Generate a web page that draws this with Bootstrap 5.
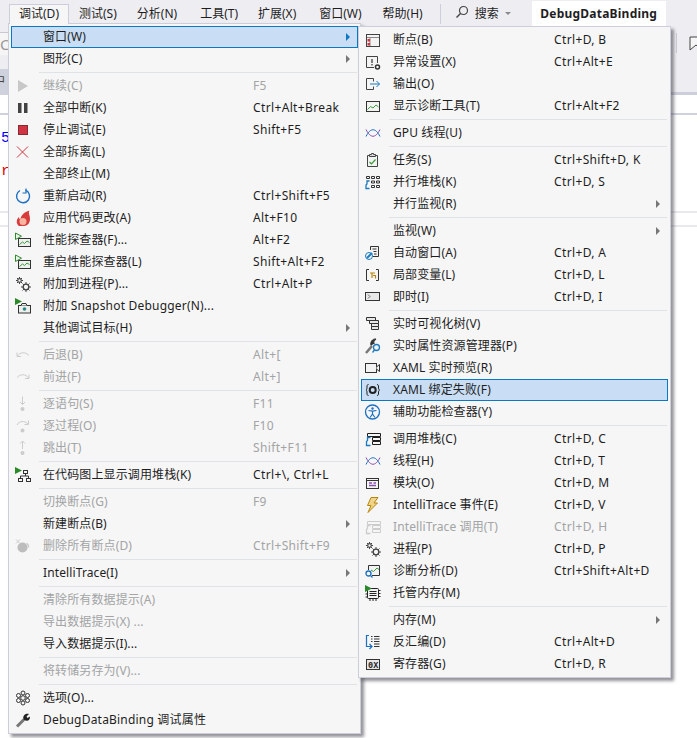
<!DOCTYPE html>
<html lang="zh-CN">
<head>
<meta charset="utf-8">
<title>Debug menu</title>
<link rel="stylesheet" href="https://cdn.jsdelivr.net/npm/bootstrap@5.3.0/dist/css/bootstrap.min.css">
<style>
html,body{height:738px;overflow:hidden;background:#fff}
body{font-family:"Noto Sans","Noto Sans CJK SC",sans-serif;font-size:12px;color:#1e1e1e;position:relative;width:697px}
.band-bar{height:32px;background:#eeeef2}
.bar-tab{margin-left:9px;margin-top:4px;width:60px;height:20px;background:#f6f6f6;border:1px solid #cccedb;border-bottom:0;position:relative;z-index:1060;line-height:18px;text-align:center}
.bar-item{line-height:20px;margin-top:4px;margin-left:20px}
.bar-first{margin-left:10px}
.bar-wide{margin-left:23px}
.bar-near{margin-left:21px}
.bar-search{margin-left:6px}
.bar-title{margin-left:21px;margin-top:1px;width:134px;height:25px;background:#fff;font-weight:700;line-height:25px;text-align:center;letter-spacing:.22px}
.bar-sep{width:1px;height:20px;background:#cccedb;margin:4px 14px 0 17px}
.bar-caret{width:0;height:0;border:3px solid transparent;border-top:3px solid #8a8a8a;border-bottom:0;margin:12px 0 0 6px}
.band-sub{height:23px;background:#eeeef2}
.side-input{width:9px;background:#f5f5f5;border-top:1px solid #c8c8d0;color:#999;overflow:hidden;font-size:15px;line-height:22px;white-space:nowrap}
.side-sep{width:1px;height:20px;background:#cccedb;margin:1px 12px 0 0}
.band-grey{height:14px;background:#eeeef2}
.band-tabs{height:23px;background:#eeeef2}
.side-tab{width:9px;background:#cfd1dd;color:#444;overflow:hidden;line-height:23px;white-space:nowrap;text-indent:-7px}
.band-line{height:3px;background:#eeeef2}
.band-line .side-tab{line-height:0}
.rule-right{width:26px;background:#cccedb}
.band-white{height:18px;background:#fff}
.rule-full{height:2px;background:#cfd1dd}
.code-area{height:96px;background:#fff;font-family:"Liberation Mono",monospace;font-size:15px;line-height:17px;padding-left:1px;padding-top:15px}
.code-num{color:#0000ff;height:33px}
.code-str{color:#e00000}
.gap-a{height:12px}
.rule-soft{height:2px;background:#e8e8ee}
.vs-menu.dropdown-menu{display:block;position:absolute;margin:0;padding:2px;background:#f6f6f6;border:1px solid #cccedb;border-radius:0;box-shadow:3px 3px 3px rgba(60,60,70,.55);color:#1e1e1e;font-size:12px;min-width:0}
.menu-main{left:8px;top:23px;width:353px;z-index:1000}
.menu-sub{left:358px;top:26px;width:313px;z-index:1001}
.vs-menu .dropdown-item{display:flex;align-items:center;height:22px;padding:0 0 0 3px;border:1px solid transparent;color:#1e1e1e;line-height:20px;white-space:nowrap;width:auto;background:transparent;letter-spacing:.12px;--br:#1c7ac0}
.vs-menu .dropdown-item.off{color:#a2a4a5;--br:#ccc}
.vs-menu .dropdown-item.hot{background:#c9def5;border-color:#0a78c2}
.vs-menu .dropdown-divider{margin:2px 1px 2px 28px;border-top:1px solid #e0e3e6;opacity:1;height:0}
.ico{width:16px;height:16px;flex:none;margin-right:12px;display:block;overflow:visible}
.off .ico{color:#ccc}
.lbl{flex:none}
.menu-main .lbl{width:210px}
.menu-sub .lbl{width:161px}
.vs-menu .lbl.lbl-free{width:auto;letter-spacing:.2px}
.key{flex:none;letter-spacing:.36px}
.sub-arrow{margin-left:auto;margin-right:7px;width:0;height:0;border-left:4px solid #777;border-top:4px solid transparent;border-bottom:4px solid transparent}
.hot .sub-arrow{border-left-color:#0a78c2}
svg text{font-family:"Liberation Mono",monospace}
</style>
</head>
<body>
<svg width="0" height="0" class="position-absolute">
<defs>
<symbol id="i-chart" viewBox="0 0 16 16" overflow="visible"><rect x="3.500" y="6.500" width="12" height="8" fill="#eef0ee" stroke="#333"/><path d="M4.500 12.500l3-2.500 2 1.500 2.500-2.500 2.500 1.500" fill="none" stroke="#3a9a3a"/><path d="M.5 1v6.500l6-3.300z" fill="#e8f5e8" stroke="#2f8a2f"/></symbol>
<symbol id="i-gears" viewBox="0 0 16 16" overflow="visible"><g fill="none" stroke="#444"><circle cx="4.500" cy="4.500" r="1.800" stroke-width="1.200"/><circle cx="11" cy="11" r="2.800" stroke-width="1.300"/></g><g stroke="#444"><path d="M4.500 1v1.500M4.500 6.500V8M1 4.500h1.500M6.500 4.500H8M2 2l1 1M6 6l1 1M7 2L6 3M3 6L2 7"/><path d="M11 6v2M11 14v2M6 11h2M14 11h2M7.500 7.500l1.300 1.300M13.200 13.200l1.300 1.300M14.500 7.500l-1.300 1.300M8.800 13.200l-1.300 1.300"/></g></symbol>
<symbol id="i-threads" viewBox="0 0 16 16" overflow="visible"><path d="M1 4.500c4.500 9 9.500 9 14 0" fill="none" stroke="#8a4fb0"/><path d="M1 11.500c4.500-9 9.500-9 14 0" fill="none" stroke="#1c70c0"/></symbol>
<symbol id="i-stack" viewBox="0 0 16 16" overflow="visible"><path d="M2.500 2.500h13v3h-13zM7.500 6.500h8v3h-8zM7.500 10.500h8v3h-8z" fill="none" stroke="currentColor"/><path d="M5.500 6.500h-3v3l-1 1v4h4" fill="none" stroke="var(--br)" stroke-width="1.300"/></symbol>
</defs>
</svg>

<div class="band-bar d-flex align-items-start">
  <div class="bar-tab">调试(D)</div>
  <div class="bar-item bar-first">测试(S)</div>
  <div class="bar-item">分析(N)</div>
  <div class="bar-item bar-wide">工具(T)</div>
  <div class="bar-item">扩展(X)</div>
  <div class="bar-item bar-wide">窗口(W)</div>
  <div class="bar-item bar-near">帮助(H)</div>
  <div class="bar-sep"></div>
  <svg class="mt-1" width="14" height="16" viewBox="0 0 14 16"><circle cx="8.500" cy="6.500" r="4" fill="none" stroke="#444" stroke-width="1.200"/><path d="M5.500 9.500L1.500 13.500" stroke="#444" stroke-width="1.500"/></svg>
  <div class="bar-item bar-search">搜索</div>
  <div class="bar-caret"></div>
  <div class="bar-title">DebugDataBinding</div>
</div>
<div class="band-sub d-flex justify-content-between">
  <div class="side-input">C</div>
  <div class="d-flex">
    <div class="side-sep"></div>
    <svg width="8" height="15" viewBox="0 0 8 15" class="mt-1"><path d="M1 14V1h12v13l-6-5z" fill="#f5f5f5" stroke="#444"/></svg>
  </div>
</div>
<div class="band-grey"></div>
<div class="band-tabs d-flex"><div class="side-tab">中</div></div>
<div class="band-line d-flex justify-content-between"><div class="side-tab"></div><div class="rule-right"></div></div>
<div class="band-white"></div>
<div class="rule-full"></div>
<div class="code-area"><div class="code-num">5</div><div class="code-str">r</div></div>
<div class="rule-soft"></div>
<div class="gap-a"></div>
<div class="rule-soft"></div>

<div class="dropdown-menu show vs-menu menu-main">
  <div class="dropdown-item hot"><span class="ico"></span><span class="lbl">窗口(W)</span><span class="sub-arrow"></span></div>
  <div class="dropdown-item"><span class="ico"></span><span class="lbl">图形(C)</span><span class="sub-arrow"></span></div>
  <div class="dropdown-divider"></div>
  <div class="dropdown-item off"><svg class="ico" viewBox="0 0 16 16"><path d="M3 2l10 6-10 6z" fill="#c8c8c8"/></svg><span class="lbl">继续(C)</span><span class="key">F5</span></div>
  <div class="dropdown-item"><svg class="ico" viewBox="0 0 16 16"><path d="M3 3h3.500v10H3zM9 3h3.500v10H9z" fill="#424242"/></svg><span class="lbl">全部中断(K)</span><span class="key">Ctrl+Alt+Break</span></div>
  <div class="dropdown-item"><svg class="ico" viewBox="0 0 16 16"><rect x="3.500" y="3.500" width="9" height="9" fill="#d13544" stroke="#8a2a33"/></svg><span class="lbl">停止调试(E)</span><span class="key">Shift+F5</span></div>
  <div class="dropdown-item"><svg class="ico" viewBox="0 0 16 16"><path d="M2 2.500l11 11M13 2.500l-11 11" stroke="#d1343f" fill="none"/></svg><span class="lbl">全部拆离(L)</span></div>
  <div class="dropdown-item"><span class="ico"></span><span class="lbl">全部终止(M)</span></div>
  <div class="dropdown-item"><svg class="ico" viewBox="0 0 16 16"><path d="M5 2.500A6.500 6.500 0 1 0 10.500 2.200" fill="none" stroke="#1c6fc4" stroke-width="1.400"/><path d="M11 .5v4.500H7.500" fill="none" stroke="#1c6fc4" stroke-width="1.200"/></svg><span class="lbl">重新启动(R)</span><span class="key">Ctrl+Shift+F5</span></div>
  <div class="dropdown-item"><svg class="ico" viewBox="0 0 16 16"><path d="M4 16C1 14 1 9.500 4 7c0 1.500.5 2.200 1.500 2.500C5.500 6 9 2 14.500 .5 13 3 15 5 15 9c0 4-2.500 7-6 7z" fill="#d83b3b"/><ellipse cx="8" cy="11.500" rx="3.500" ry="3.500" fill="#f9b5a0"/></svg><span class="lbl">应用代码更改(A)</span><span class="key">Alt+F10</span></div>
  <div class="dropdown-item"><svg class="ico"><use href="#i-chart"/></svg><span class="lbl">性能探查器(F)...</span><span class="key">Alt+F2</span></div>
  <div class="dropdown-item"><svg class="ico"><use href="#i-chart"/></svg><span class="lbl">重启性能探查器(L)</span><span class="key">Shift+Alt+F2</span></div>
  <div class="dropdown-item"><svg class="ico"><use href="#i-gears"/></svg><span class="lbl">附加到进程(P)...</span><span class="key">Ctrl+Alt+P</span></div>
  <div class="dropdown-item"><svg class="ico" viewBox="0 0 16 16"><rect x="3.500" y="7.500" width="12" height="7.500" fill="#eef0ee" stroke="#333"/><path d="M6 7.500l1-2h4l1 2" fill="#eef0ee" stroke="#333"/><circle cx="9.500" cy="11" r="1.800" fill="#2a8a8a"/><path d="M0 0v7l7-3.500z" fill="#2a8a2a"/></svg><span class="lbl lbl-free">附加 Snapshot Debugger(N)...</span></div>
  <div class="dropdown-item"><span class="ico"></span><span class="lbl">其他调试目标(H)</span><span class="sub-arrow"></span></div>
  <div class="dropdown-divider"></div>
  <div class="dropdown-item off"><svg class="ico" viewBox="0 0 16 16"><path d="M2 5.500v4h4M2.500 9C5 5 10 4.500 14 8.500" fill="none" stroke="#ccc"/></svg><span class="lbl">后退(B)</span><span class="key">Alt+[</span></div>
  <div class="dropdown-item off"><svg class="ico" viewBox="0 0 16 16"><path d="M14 5.500v4h-4M13.500 9C11 5 6 4.500 2 8.500" fill="none" stroke="#ccc"/></svg><span class="lbl">前进(F)</span><span class="key">Alt+]</span></div>
  <div class="dropdown-divider"></div>
  <div class="dropdown-item off"><svg class="ico" viewBox="0 0 16 16"><path d="M7.500 .5v8M5 6l2.500 2.500L10 6" fill="none" stroke="#ccc"/><circle cx="7.500" cy="13" r="2" fill="#ccc"/></svg><span class="lbl">逐语句(S)</span><span class="key">F11</span></div>
  <div class="dropdown-item off"><svg class="ico" viewBox="0 0 16 16"><path d="M2 7C4 2.500 10 2.500 13 6M13.500 2.500v4h-4" fill="none" stroke="#ccc"/><circle cx="7.500" cy="12.500" r="2" fill="#ccc"/></svg><span class="lbl">逐过程(O)</span><span class="key">F10</span></div>
  <div class="dropdown-item off"><svg class="ico" viewBox="0 0 16 16"><path d="M7.500 9V1M5 3.500L7.500 1 10 3.500" fill="none" stroke="#ccc"/><circle cx="7.500" cy="13" r="2" fill="#ccc"/></svg><span class="lbl">跳出(T)</span><span class="key">Shift+F11</span></div>
  <div class="dropdown-divider"></div>
  <div class="dropdown-item"><svg class="ico" viewBox="0 0 16 16"><path d="M0 0v7l7-3.500z" fill="#2a8a2a"/><g fill="none" stroke="#333"><rect x="8.500" y="3.500" width="4" height="3"/><rect x="3.500" y="11.500" width="4" height="3"/><rect x="11.500" y="11.500" width="4" height="3"/><path d="M10.500 6.500v2.500M5.500 11.500V9h8v2.500"/></g></svg><span class="lbl">在代码图上显示调用堆栈(K)</span><span class="key">Ctrl+\, Ctrl+L</span></div>
  <div class="dropdown-divider"></div>
  <div class="dropdown-item off"><span class="ico"></span><span class="lbl">切换断点(G)</span><span class="key">F9</span></div>
  <div class="dropdown-item"><span class="ico"></span><span class="lbl">新建断点(B)</span><span class="sub-arrow"></span></div>
  <div class="dropdown-item off"><svg class="ico" viewBox="0 0 16 16"><circle cx="7.500" cy="9.500" r="5" fill="#bdbdbd"/><path d="M11.500 5a5 5 0 0 1 2 4.500" fill="none" stroke="#ccc" stroke-width="1.500"/><path d="M1 1.500l4 4M5 1.500l-4 4" stroke="#ccc"/></svg><span class="lbl">删除所有断点(D)</span><span class="key">Ctrl+Shift+F9</span></div>
  <div class="dropdown-divider"></div>
  <div class="dropdown-item"><span class="ico"></span><span class="lbl">IntelliTrace(I)</span><span class="sub-arrow"></span></div>
  <div class="dropdown-divider"></div>
  <div class="dropdown-item off"><span class="ico"></span><span class="lbl">清除所有数据提示(A)</span></div>
  <div class="dropdown-item off"><span class="ico"></span><span class="lbl">导出数据提示(X) ...</span></div>
  <div class="dropdown-item"><span class="ico"></span><span class="lbl">导入数据提示(I)...</span></div>
  <div class="dropdown-divider"></div>
  <div class="dropdown-item off"><span class="ico"></span><span class="lbl">将转储另存为(V)...</span></div>
  <div class="dropdown-divider"></div>
  <div class="dropdown-item"><svg class="ico" viewBox="0 0 16 16"><g fill="none" stroke="#333"><circle cx="8" cy="8" r="2.300"/><circle cx="8" cy="3" r="2"/><circle cx="8" cy="13" r="2"/><circle cx="3.500" cy="5.500" r="2"/><circle cx="12.500" cy="5.500" r="2"/><circle cx="3.500" cy="10.500" r="2"/><circle cx="12.500" cy="10.500" r="2"/></g></svg><span class="lbl">选项(O)...</span></div>
  <div class="dropdown-item"><svg class="ico" viewBox="0 0 16 16"><path d="M2 14.500L9 7.500" stroke="#777" stroke-width="3"/><path d="M8.500 7.500C7.500 4 10 1 14 2L11.500 4.500l1 1.500 2.500-1.500C15 9 12 10 8.500 7.500z" fill="#222"/></svg><span class="lbl lbl-free">DebugDataBinding 调试属性</span></div>
</div>

<div class="dropdown-menu show vs-menu menu-sub">
  <div class="dropdown-item"><svg class="ico" viewBox="0 0 16 16"><rect x="1.500" y="2.500" width="13" height="12" fill="#f3f3f3" stroke="#424242"/><path d="M2 5.500h12M5 6v8" stroke="#888"/><rect x="2.500" y="7" width="2.500" height="2.500" fill="#d1343f"/><rect x="2.500" y="11" width="2.500" height="2.500" fill="#d1343f"/></svg><span class="lbl">断点(B)</span><span class="key">Ctrl+D, B</span></div>
  <div class="dropdown-item"><svg class="ico" viewBox="0 0 16 16"><path d="M9 13.500H1.500v-11h11V9" fill="#f3f3f3" stroke="#424242"/><path d="M7 5v4M7 10v1.500" stroke="#333" stroke-width="1.200"/><circle cx="12.500" cy="13" r="2" fill="none" stroke="#333" stroke-width="1.500"/></svg><span class="lbl">异常设置(X)</span><span class="key">Ctrl+Alt+E</span></div>
  <div class="dropdown-item"><svg class="ico" viewBox="0 0 16 16"><path d="M8.500 5.500v-3h-7v11h7v-3" fill="none" stroke="#424242"/><path d="M5 8h9.500M11.500 5l3 3-3 3" fill="none" stroke="#1c7ac0"/></svg><span class="lbl">输出(O)</span></div>
  <div class="dropdown-item"><svg class="ico" viewBox="0 0 16 16"><rect x="1.500" y="3.500" width="13" height="10" fill="#f3f3f3" stroke="#333"/><path d="M2.500 11.500l3-3 2.500 1.500 3-3 2.500 2" fill="none" stroke="#3a9a3a"/></svg><span class="lbl">显示诊断工具(T)</span><span class="key">Ctrl+Alt+F2</span></div>
  <div class="dropdown-divider"></div>
  <div class="dropdown-item"><svg class="ico"><use href="#i-threads"/></svg><span class="lbl">GPU 线程(U)</span></div>
  <div class="dropdown-divider"></div>
  <div class="dropdown-item"><svg class="ico" viewBox="0 0 16 16"><path d="M4 3.500H2.500v11h10v-11H11" fill="#f3f3f3" stroke="#444"/><path d="M4.500 4.500v-2h2v-1h2v1h2v2z" fill="#ddd" stroke="#444"/><path d="M4.500 10l2 2 4-4.500" fill="none" stroke="#3a9a3a" stroke-width="1.200"/></svg><span class="lbl">任务(S)</span><span class="key">Ctrl+Shift+D, K</span></div>
  <div class="dropdown-item"><svg class="ico" viewBox="0 0 16 16"><path d="M1.500 2.500h3v2h-3zM6.500 2.500h3v2h-3zM11.500 2.500h3v2h-3zM6.500 7h3v2h-3zM11.500 7h3v2h-3zM6.500 11.500h3v2h-3zM11.500 11.500h3v2h-3z" fill="none" stroke="#333"/><path d="M4.500 7h-2.500v3l-1 1v3.500h3.500" fill="none" stroke="#1c7ac0" stroke-width="1.300"/></svg><span class="lbl">并行堆栈(K)</span><span class="key">Ctrl+D, S</span></div>
  <div class="dropdown-item"><span class="ico"></span><span class="lbl">并行监视(R)</span><span class="sub-arrow"></span></div>
  <div class="dropdown-divider"></div>
  <div class="dropdown-item"><span class="ico"></span><span class="lbl">监视(W)</span><span class="sub-arrow"></span></div>
  <div class="dropdown-item"><svg class="ico" viewBox="0 0 16 16"><path d="M5.500 5V1.500h8v10H8" fill="#f3f3f3" stroke="#333"/><path d="M7.500 4h4M8.500 6.500h3M9 9h2.500" stroke="#333"/><path d="M2 13l5-5" stroke="#1c7ac0" stroke-width="2"/><circle cx="4" cy="11" r="3.500" fill="none" stroke="#1c7ac0"/></svg><span class="lbl">自动窗口(A)</span><span class="key">Ctrl+D, A</span></div>
  <div class="dropdown-item"><svg class="ico" viewBox="0 0 16 16"><path d="M4 2.500H1.500v11H4M11 2.500h2.500v11H11" fill="none" stroke="#333"/><path d="M5 6h5M7 6v5M8 8.500h2.500v3" fill="none" stroke="#b8860b" stroke-width="1.200"/></svg><span class="lbl">局部变量(L)</span><span class="key">Ctrl+D, L</span></div>
  <div class="dropdown-item"><svg class="ico" viewBox="0 0 16 16"><rect x=".5" y="3.500" width="14" height="8" fill="#e8e8e8" stroke="#333"/><path d="M3 5.500l2 2-2 2" fill="none" stroke="#666"/></svg><span class="lbl">即时(I)</span><span class="key">Ctrl+D, I</span></div>
  <div class="dropdown-divider"></div>
  <div class="dropdown-item"><svg class="ico" viewBox="0 0 16 16"><g fill="#e8e8e8" stroke="#333"><path d="M1.500 1.500h9v3h-9z"/><path d="M4.500 4.500h9v3h-9z"/><path d="M6.500 7.500h7v3h-7z"/><path d="M6.500 10.500h7v3h-7z"/></g></svg><span class="lbl">实时可视化树(V)</span></div>
  <div class="dropdown-item"><svg class="ico" viewBox="0 0 16 16"><path d="M1 15L7 8" stroke="#777" stroke-width="2.500"/><path d="M6 7.500C5 4 7.500 .5 11 1L8.500 4l1 1.500" fill="#333" stroke="#333"/><circle cx="11.500" cy="9.500" r="3" fill="#f3f3f3" stroke="#1c7ac0" stroke-width="1.300"/><path d="M9.500 12l-2 2.500" stroke="#1c7ac0" stroke-width="1.300"/></svg><span class="lbl">实时属性资源管理器(P)</span></div>
  <div class="dropdown-item"><svg class="ico" viewBox="0 0 16 16"><rect x=".5" y="3.500" width="11" height="9" fill="#f3f3f3" stroke="#333"/><path d="M11.500 7l3-2.500v7l-3-2.500" fill="#f3f3f3" stroke="#333"/></svg><span class="lbl">XAML 实时预览(R)</span></div>
  <div class="dropdown-item hot"><svg class="ico" viewBox="0 0 16 16"><path d="M3.500 2.500c-1.500 0-1.500 1-1.500 2.500S2 7.500 1 8c1 .5 1 1.500 1 3s0 2.500 1.500 2.500M12 2.500c1.500 0 1.500 1 1.500 2.500s0 2.500 1 3c-1 .5-1 1.500-1 3s0 2.500-1.500 2.500" fill="none" stroke="#222"/><circle cx="7.700" cy="8" r="3" fill="none" stroke="#222" stroke-width="2"/></svg><span class="lbl">XAML 绑定失败(F)</span></div>
  <div class="dropdown-item"><svg class="ico" viewBox="0 0 16 16"><circle cx="7.500" cy="8" r="7" fill="none" stroke="#1c70c0" stroke-width="1.300"/><circle cx="7.500" cy="4.500" r="1.200" fill="#1c70c0"/><path d="M3.500 6.500l4 .7 4-.7M7.500 7v3L5 13.500M7.500 10l2.500 3.500" fill="none" stroke="#1c70c0" stroke-width="1.200"/></svg><span class="lbl">辅助功能检查器(Y)</span></div>
  <div class="dropdown-divider"></div>
  <div class="dropdown-item"><svg class="ico"><use href="#i-stack"/></svg><span class="lbl">调用堆栈(C)</span><span class="key">Ctrl+D, C</span></div>
  <div class="dropdown-item"><svg class="ico"><use href="#i-threads"/></svg><span class="lbl">线程(H)</span><span class="key">Ctrl+D, T</span></div>
  <div class="dropdown-item"><svg class="ico" viewBox="0 0 16 16"><rect x="1.500" y="3.500" width="12" height="10" fill="#f3f3f3" stroke="#333"/><path d="M1.500 5.500h12" stroke="#333"/><path d="M4 8h3M8.500 8H11M4 10.500h7" stroke="#8a4fb0" stroke-width="1.300"/></svg><span class="lbl">模块(O)</span><span class="key">Ctrl+D, M</span></div>
  <div class="dropdown-item"><svg class="ico" viewBox="0 0 16 16"><path d="M6 .5h7L9 6h3.500L3 15.500 6 8.500H2.500z" fill="#f0d48a" stroke="#b8860b"/></svg><span class="lbl">IntelliTrace 事件(E)</span><span class="key">Ctrl+D, V</span></div>
  <div class="dropdown-item off"><svg class="ico"><use href="#i-stack"/></svg><span class="lbl">IntelliTrace 调用(T)</span><span class="key">Ctrl+D, H</span></div>
  <div class="dropdown-item"><svg class="ico"><use href="#i-gears"/></svg><span class="lbl">进程(P)</span><span class="key">Ctrl+D, P</span></div>
  <div class="dropdown-item"><svg class="ico" viewBox="0 0 16 16"><path d="M3.500 7V2.500h11v10H7" fill="#f3f3f3" stroke="#333"/><path d="M6 7l2.500 1.500L12 5l2 1.500" fill="none" stroke="#3a9a3a"/><circle cx="3.500" cy="10.500" r="2.500" fill="none" stroke="#1c70c0" stroke-width="1.300"/><path d="M5.500 12.500l2 2" stroke="#1c70c0" stroke-width="1.300"/></svg><span class="lbl">诊断分析(D)</span><span class="key">Ctrl+Shift+Alt+D</span></div>
  <div class="dropdown-item"><svg class="ico" viewBox="0 0 16 16"><rect x="2.500" y="3.500" width="11" height="10" rx="1" fill="#f3f3f3" stroke="#222"/><path d="M4.500 6.500h7M4.500 8.500h7M4.500 10.500h7M5 13.500V16M8 13.500V16M11 13.500V16M14 5.500h1.500M14 8.500h1.500M14 11.500h1.500M.5 9h2M.5 12h2" stroke="#222"/><path d="M0 0v7l7-3.500z" fill="#2a8a2a"/></svg><span class="lbl">托管内存(M)</span></div>
  <div class="dropdown-divider"></div>
  <div class="dropdown-item"><span class="ico"></span><span class="lbl">内存(M)</span><span class="sub-arrow"></span></div>
  <div class="dropdown-item"><svg class="ico" viewBox="0 0 16 16"><path d="M4 1.500H1.500v11h5M4.500 10L7 12.500 4.500 15" fill="none" stroke="#1c70c0" stroke-width="1.200"/><path d="M6 2.500h1.500M9 2.500h5.500M6 5h1.500M9 5h5.500M6 7.500h1.500M9 7.500h5.500M9 10h5.500M9 12.500h5.500" stroke="#333"/></svg><span class="lbl">反汇编(D)</span><span class="key">Ctrl+Alt+D</span></div>
  <div class="dropdown-item"><svg class="ico" viewBox="0 0 16 16"><rect x="1.500" y="3.500" width="13" height="10" fill="#e8e8e8" stroke="#333"/><text x="3" y="11.500" font-size="8.500" font-weight="700" fill="#222">0X</text></svg><span class="lbl">寄存器(G)</span><span class="key">Ctrl+D, R</span></div>
</div>
</body>
</html>
